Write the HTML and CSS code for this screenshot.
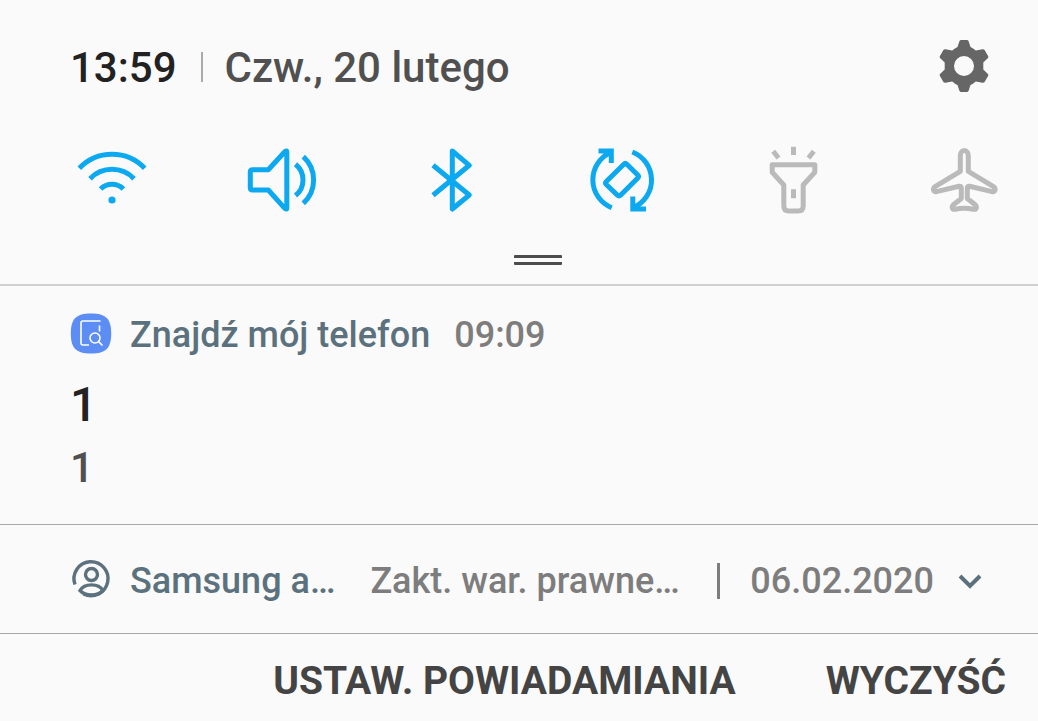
FILE: index.html
```html
<!DOCTYPE html>
<html lang="pl">
<head>
    <meta charset="UTF-8">
    <meta name="viewport" content="width=device-width, initial-scale=1.0">
    <title>Powiadomienia</title>
    <link rel="stylesheet" href="styles.css">
</head>
<body>
    <header class="panel">
        <div class="status">
            <span class="time">13:59</span>
            <span class="date">Czw., 20 lutego</span>
            <button class="icon-button settings" aria-label="Ustawienia">
                <svg width="56" height="56" viewBox="-28 -28 56 56">
                    <path fill-rule="evenodd" d="M-3-26H3Q4-26 4.5-25L6.5-19Q9-18 11.8-15.5L18.5-16.8Q20-17 20.6-16L24.2-9.8Q24.6-9 24-8L19.3-3.4V3.4L24 8Q24.6 9 24.2 9.8L20.6 16Q20 17 18.5 16.8L11.8 15.5Q9 18 6.5 19L4.5 25Q4 26 3 26H-3Q-4 26-4.5 25L-6.5 19Q-9 18-11.8 15.5L-18.5 16.8Q-20 17-20.6 16L-24.2 9.8Q-24.6 9-24 8L-19.3 3.4V-3.4L-24-8Q-24.6-9-24.2-9.8L-20.6-16Q-20-17-18.5-16.8L-11.8-15.5Q-9-18-6.5-19L-4.5-25Q-4-26-3-26ZM10 0A10 10 0 1 0-10 0A10 10 0 1 0 10 0Z"/>
                </svg>
            </button>
        </div>
        <div class="toggles">
            <button class="icon-button toggle on" aria-label="Wi-Fi">
                <svg width="72" height="72" viewBox="0 0 72 72">
                    <path d="M3.3 24.3A45.2 45.2 0 0 1 68.7 24.3M14 34.7A30.5 30.5 0 0 1 58 34.7M24.6 45A16 16 0 0 1 47.4 45"/>
                    <circle class="dot" cx="36" cy="56" r="3.6"/>
                </svg>
            </button>
            <button class="icon-button toggle on" aria-label="Dźwięk">
                <svg width="72" height="72" viewBox="0 0 72 72">
                    <path d="M6.5 25.7H22.3L38.8 7.7Q40.8 6 40.8 8V64Q40.8 66 38.8 64.3L22.3 46H6.5Q4.3 46 4.3 43.8V27.9Q4.3 25.7 6.5 25.7ZM49.5 20.3A20 20 0 0 1 49.5 51.5M57.3 12.7A31.5 31.5 0 0 1 57.3 59.3"/>
                </svg>
            </button>
            <button class="icon-button toggle on" aria-label="Bluetooth">
                <svg width="72" height="72" viewBox="0 0 72 72">
                    <path d="M16 21.3L52.3 51 35.3 65V7L52.3 21.3 16 51.3"/>
                </svg>
            </button>
            <button class="icon-button toggle on" aria-label="Autoobracanie">
                <svg width="72" height="72" viewBox="0 0 72 72">
                    <path d="M36.8 20.2Q38.3 18.7 39.8 20.2L50.8 31Q52.3 32.5 50.8 34L33.5 51.3Q32 52.8 30.5 51.3L19.3 40.5Q17.8 39 19.3 37.5Z"/>
                    <path class="sharp" d="M24.7 63.7A30 30 0 0 1 23.5 8.5M11.5 6.9H24.3V19M45.3 8A30 30 0 0 1 46.5 63.5M45.8 52.5V65.1H59"/>
                </svg>
            </button>
            <button class="icon-button toggle" aria-label="Latarka">
                <svg width="72" height="72" viewBox="0 0 72 72">
                    <path d="M14.2 20.7H56.8V28.3L45.2 41V62Q45.2 67 40.2 67H30.8Q25.8 67 25.8 62V41L14.2 28.3ZM15.2 7.3L20.5 14M35.5 2.7V11M55.8 7.3L50.5 14M35.5 45.3V54.3"/>
                </svg>
            </button>
            <button class="icon-button toggle" aria-label="Tryb samolotowy">
                <svg width="72" height="72" viewBox="0 0 72 72">
                    <path d="M36.3 6.4C33.8 6.4 32.3 9 32.3 12V27.3L7.5 42.3C4.2 44.5 5.2 48.4 8.5 47.6L31 42.2Q33.3 42 33.3 44V54.5L25.4 60.8C23.2 63 24.2 65.9 27.2 65.2Q36.3 63.2 45.4 65.2C48.4 65.9 49.4 63 47.2 60.8L39.3 54.5V44Q39.3 42 41.6 42.2L64.1 47.6C67.4 48.4 68.4 44.5 65.1 42.3L40.3 27.3V12C40.3 9 38.8 6.4 36.3 6.4Z"/>
                </svg>
            </button>
        </div>
        <div class="handle-row">
            <button class="icon-button handle" aria-label="Rozwiń panel"></button>
        </div>
    </header>

    <main>
        <article class="notification">
            <div class="app-row">
                <svg class="app-icon" width="42" height="42" viewBox="0 0 42 42">
                    <path fill="#5b8df5" d="M21 .5C36 .5 41.2 6 41.2 20.5S36 40.5 21 40.5.8 35 .8 20.5 6 .5 21 .5Z"/>
                    <path fill="none" stroke="#fff" stroke-width="1.6" d="M30.5 8H13Q11 8 11 10V30Q11 32 13 32H19M29.5 12.5V18.5M28.6 28.6L32.5 32.5"/>
                    <circle fill="none" stroke="#fff" stroke-width="1.6" cx="25" cy="25" r="5"/>
                </svg>
                <span class="app-name">Znajdź mój telefon</span>
                <span class="muted">09:09</span>
            </div>
            <h2 class="title">1</h2>
            <p class="text">1</p>
        </article>

        <article class="notification compact">
            <svg class="app-icon" width="42" height="42" viewBox="0 0 42 42">
                <g fill="none" stroke="#5b727e" stroke-width="3.4">
                    <path d="M5 25.5A17 17 0 1 1 13.5 35"/>
                    <circle cx="21.5" cy="15.5" r="6"/>
                    <path d="M10 31.5C14.5 24 28.5 24 33 31.5C27.5 37.5 15.5 37.5 10 31.5Z"/>
                </g>
            </svg>
            <span class="app-name">Samsung a…</span>
            <span class="muted summary">Zakt. war. prawne…</span>
            <span class="muted day">06.02.2020</span>
            <button class="icon-button expand" aria-label="Rozwiń">
                <svg width="28" height="28" viewBox="0 0 28 28">
                    <path d="M4 9L14 19 24 9"/>
                </svg>
            </button>
        </article>
    </main>

    <footer class="actions">
        <button class="action">USTAW. POWIADAMIANIA</button>
        <button class="action">WYCZYŚĆ</button>
    </footer>
</body>
</html>
```
FILE: styles.css
```css
:root {
    --bg: #fafafa;
    --blue: #0ca8f0;
    --off: #bababa;
    --slate: #5b727e;
    --grey: #7d7d7d;
    --line: #a8a8a8;
}
* {
    box-sizing: border-box;
}
body {
    margin: 0;
    background: var(--bg);
    font-family: Roboto, "Liberation Sans", sans-serif;
    font-size: 36px;
    font-weight: 500;
    line-height: 44px;
}
svg {
    display: block;
    flex: none;
}
button {
    border: none;
    background: none;
    padding: 0;
    font: inherit;
    cursor: pointer;
}
.panel {
    padding-top: 38px;
    border-bottom: 2px solid #d0d0d0;
}
.status {
    display: flex;
    align-items: center;
    padding: 0 46px 0 70px;
    font-size: 42px;
}
.time,
.date {
    padding-top: 4px;
}
.time {
    color: #222;
    padding-right: 24px;
}
.date {
    color: #505050;
    padding-left: 24px;
    position: relative;
}
.date::before {
    content: "";
    position: absolute;
    left: 0;
    top: 10px;
    width: 2px;
    height: 30px;
    background: #aaa;
}
.settings {
    margin-left: auto;
    fill: #666;
}
.toggles {
    display: flex;
    justify-content: space-between;
    padding: 50px 38px 0 76px;
}
.toggle svg {
    fill: none;
    stroke: var(--off);
    stroke-width: 5;
    stroke-linejoin: round;
}
.toggle.on svg {
    stroke: var(--blue);
}
.toggle .sharp {
    stroke-linejoin: miter;
}
.toggle .dot {
    fill: var(--blue);
    stroke: none;
}
.handle-row {
    display: flex;
    justify-content: center;
    padding: 39px 38px 19px 76px;
}
.handle {
    width: 48px;
    height: 10px;
    border-top: 3px solid #4c4c4c;
    border-bottom: 3px solid #4c4c4c;
    border-radius: 1px;
}
.notification {
    padding: 27px 56px 31px 70px;
    border-bottom: 1px solid var(--line);
}
.app-row,
.compact {
    display: flex;
    align-items: center;
}
.app-icon {
    align-self: flex-start;
    margin-right: 18px;
}
.app-name {
    color: var(--slate);
    margin-right: 24px;
}
.muted {
    color: var(--grey);
}
.title,
.text {
    margin: 0;
    font-weight: 500;
}
.title {
    margin-top: 18px;
    color: #222;
    font-size: 48px;
    line-height: 60px;
}
.text {
    margin-top: 8px;
    color: #505050;
    font-size: 42px;
    line-height: 50px;
}
.compact {
    padding: 34px 54px 30px 70px;
}
.compact .app-name {
    margin-right: 35px;
}
.summary {
    margin-right: auto;
    white-space: nowrap;
}
.day {
    padding-left: 33px;
    position: relative;
}
.day::before {
    content: "";
    position: absolute;
    left: 0;
    top: 4px;
    width: 3px;
    height: 36px;
    background: var(--grey);
}
.expand {
    margin-left: 22px;
}
.expand svg {
    fill: none;
    stroke: var(--slate);
    stroke-width: 4;
}
.actions {
    display: flex;
    justify-content: flex-end;
    gap: 90px;
    padding: 25px 32px 18px;
}
.action {
    color: #444;
    font-size: 39px;
    font-weight: 700;
}
```
